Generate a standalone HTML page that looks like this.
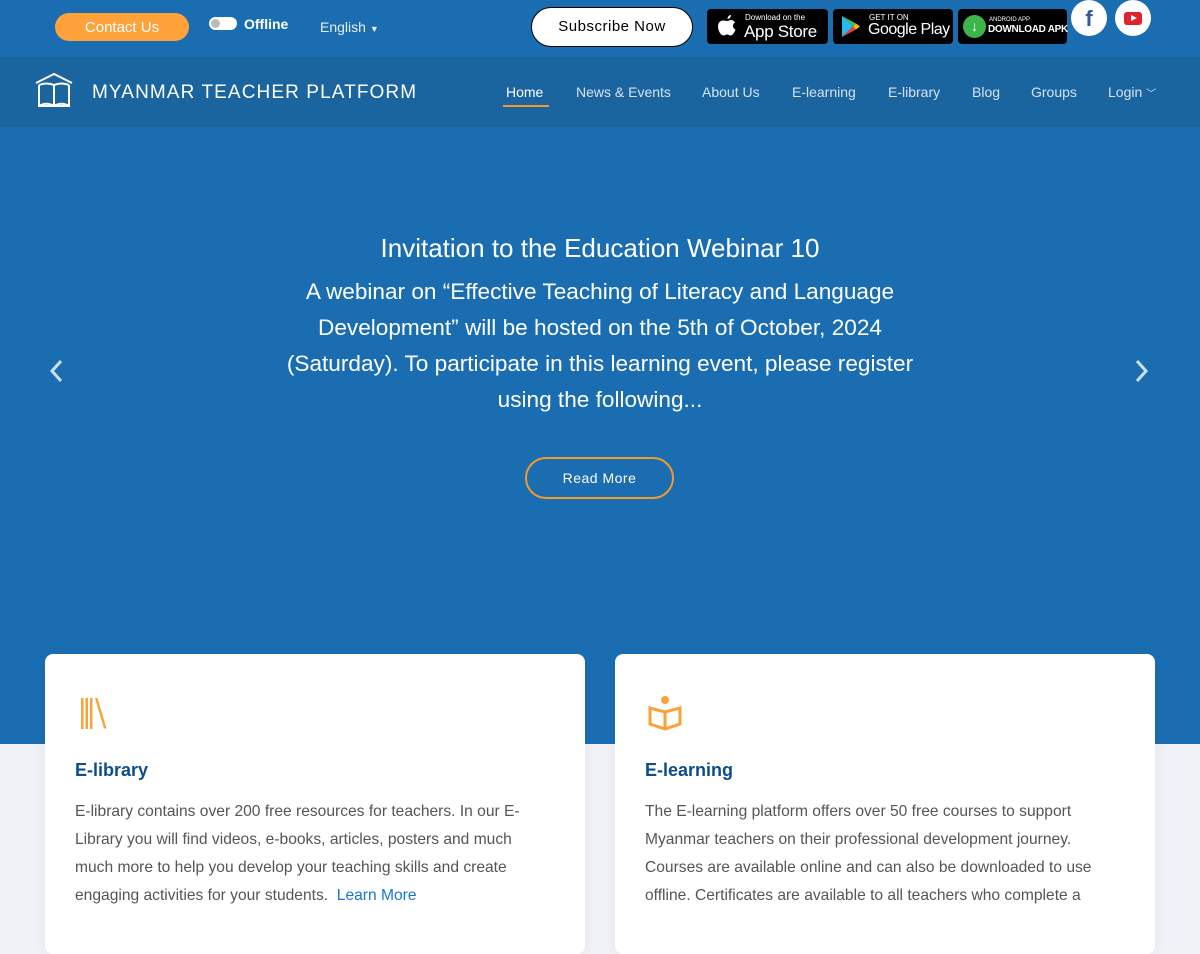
<!DOCTYPE html>
<html><head><meta charset="utf-8"><style>
*{box-sizing:border-box;margin:0;padding:0}
body{width:1200px;height:901px;overflow:hidden;font-family:"Liberation Sans",sans-serif;background:#f0f2f7;position:relative}
.top{position:absolute;left:0;top:0;width:1200px;height:57px;background:#1b6db2}
.nav{position:absolute;left:0;top:57px;width:1200px;height:70px;background:#1a64a0}
.hero{position:absolute;left:0;top:127px;width:1200px;height:617px;background:#1b6db2}
.abs{position:absolute;white-space:nowrap}
.contact{left:55px;top:13px;width:134px;height:28px;border-radius:14px;background:#ffa23a;color:#fff;font-size:15px;text-align:center;line-height:29px}
.tog{left:209px;top:17px;width:28px;height:13px;border-radius:7px;background:#fff}
.tog:after{content:"";position:absolute;left:2px;top:2px;width:9px;height:9px;border-radius:50%;background:#bbb}
.w{color:#fff}
.sub{left:531px;top:7px;width:162px;height:40px;border:1px solid #000;border-radius:20px;background:#fff;font-size:15px;text-align:center;line-height:38px;letter-spacing:.5px}
.badge{top:9px;height:35px;background:#000;border-radius:4px;color:#fff}
.circ{top:0;width:36px;height:36px;border-radius:50%;background:#fff}
.nl{top:84px;font-size:14px;color:#d6e3f0}
.card{top:654px;width:540px;height:300px;background:#fff;border-radius:8px;box-shadow:0 2px 12px rgba(0,0,0,.06)}
.card h3{position:absolute;left:30px;top:106px;font-size:18px;color:#0d4d8a}
.card p{position:absolute;left:30px;top:144px;white-space:nowrap;font-size:15.6px;line-height:28px;color:#555}
</style></head><body>
<div class="top"></div><div class="nav"></div><div class="hero"></div>
<div class="abs contact">Contact Us</div>
<div class="abs tog"></div>
<div class="abs w" style="left:244px;top:16px;font-size:14px;font-weight:bold">Offline</div>
<div class="abs w" style="left:320px;top:19px;font-size:14px;color:#e6eef7">English <span style="font-size:9px">▼</span></div>
<div class="abs sub">Subscribe Now</div>
<div class="abs badge" style="left:707px;width:121px">
 <svg class="abs" style="left:10px;top:6px" width="20" height="24" viewBox="0 0 20 24"><path d="M14 0c0 2-1.5 4-3.5 4 0-2 1.5-4 3.5-4zM10 6c1.5 0 2.5-1 4-1 2 0 3.5 1.5 4 2.5-3 1.5-2.5 6 .5 7-1 3-3 6-5 6-1.5 0-2-1-3.5-1s-2 1-3.5 1C4 20.5 1 16 1 11.5 1 7.5 3.5 5.5 6 5.5c1.5 0 2.5 .5 4 .5z" fill="#fff"/></svg>
 <div class="abs" style="left:38px;top:4px;font-size:8px">Download on the</div>
 <div class="abs" style="left:37px;top:13px;font-size:17px;letter-spacing:-.3px">App Store</div></div>
<div class="abs badge" style="left:833px;width:120px">
 <svg class="abs" style="left:8px;top:6px" width="20" height="23" viewBox="0 0 20 23"><path d="M1 1l11 10.5L1 22z" fill="#2bb8f0"/><path d="M1 1l14 7.5-3 3z" fill="#34c26a"/><path d="M1 22l14-7.5-3-3z" fill="#ea4335"/><path d="M15 8.5l4 3-4 3-3-3z" fill="#fbbc04"/></svg>
 <div class="abs" style="left:36px;top:4px;font-size:8px">GET IT ON</div>
 <div class="abs" style="left:35px;top:12px;font-size:16px;letter-spacing:-.5px">Google Play</div></div>
<div class="abs badge" style="left:958px;width:109px">
 <div class="abs" style="left:5px;top:6px;width:23px;height:23px;border-radius:50%;background:#3cb54a;color:#fff;font-size:14px;text-align:center;line-height:23px;font-weight:bold">↓</div>
 <div class="abs" style="left:31px;top:8px;font-size:6px">ANDROID APP</div>
 <div class="abs" style="left:30px;top:15px;font-size:10px;font-weight:bold;letter-spacing:-.3px">DOWNLOAD APK</div></div>
<div class="abs circ" style="left:1071px;color:#3b5998;font-weight:bold;font-size:22px;text-align:center;line-height:38px">f</div>
<div class="abs circ" style="left:1115px"><div class="abs" style="left:9px;top:12px;width:18px;height:13px;border-radius:3px;background:#e0232a"></div><div class="abs" style="left:16px;top:15px;border-left:6px solid #fff;border-top:3.5px solid transparent;border-bottom:3.5px solid transparent"></div></div>
<svg class="abs" style="left:34px;top:71px" width="40" height="38" viewBox="0 0 40 38" fill="none" stroke="#fff" stroke-width="2"><path d="M2 12L20 3l18 9"/><path d="M5 14v21h30V14M5 35c5-3 10-3 15 0 5-3 10-3 15 0M20 14v21M5 14c5-2 10-2 15 0 5-2 10-2 15 0"/></svg>
<div class="abs w" style="left:92px;top:82px;font-size:19px;letter-spacing:1.1px">MYANMAR TEACHER PLATFORM</div>
<div class="abs nl" style="left:506px;color:#fff">Home</div>
<div class="abs" style="left:503px;top:105px;width:46px;height:2px;background:#f39a2b"></div>
<div class="abs nl" style="left:576px">News &amp; Events</div>
<div class="abs nl" style="left:702px">About Us</div>
<div class="abs nl" style="left:792px">E-learning</div>
<div class="abs nl" style="left:888px">E-library</div>
<div class="abs nl" style="left:972px">Blog</div>
<div class="abs nl" style="left:1031px">Groups</div>
<div class="abs nl" style="left:1108px">Login <span style="font-size:10px">﹀</span></div>
<div class="abs w" style="left:0;width:1200px;top:233px;text-align:center;font-size:26px">Invitation to the Education Webinar 10</div>
<div class="abs w" style="left:0;width:1200px;top:274px;text-align:center;font-size:22.6px;line-height:36px">A webinar on “Effective Teaching of Literacy and Language<br>Development” will be hosted on the 5th of October, 2024<br>(Saturday). To participate in this learning event, please register<br>using the following...</div>
<div class="abs w" style="left:525px;top:457px;width:149px;height:42px;border:2px solid #f39a2b;border-radius:21px;text-align:center;line-height:38px;font-size:14px;letter-spacing:.5px">Read More</div>
<svg class="abs" style="left:48px;top:359px" width="16" height="24" viewBox="0 0 16 24"><path d="M13 2L4 12l9 10" stroke="#cfe0f0" stroke-width="3" fill="none"/></svg>
<svg class="abs" style="left:1134px;top:359px" width="16" height="24" viewBox="0 0 16 24"><path d="M3 2l9 10-9 10" stroke="#cfe0f0" stroke-width="3" fill="none"/></svg>
<div class="abs card" style="left:45px">
 <svg class="abs" style="left:35px;top:42px" width="32" height="34" viewBox="0 0 32 34" fill="#f9a23a"><rect x="1" y="2" width="2.5" height="31"/><rect x="5.5" y="2" width="2.5" height="31"/><rect x="10" y="2" width="2.5" height="31"/><path d="M15 2h2.5l9 30.5h-2.5z"/></svg>
 <h3>E-library</h3>
 <p>E-library contains over 200 free resources for teachers. In our E-<br>Library you will find videos, e-books, articles, posters and much<br>much more to help you develop your teaching skills and create<br>engaging activities for your students. &nbsp;<span style="color:#1a73d8">Learn More</span></p></div>
<div class="abs card" style="left:615px">
 <svg class="abs" style="left:32px;top:40px" width="38" height="40" viewBox="0 0 38 40"><circle cx="18" cy="6" r="4" fill="#f9a23a"/><path d="M3 14v16l15 5 15-5V14l-15 4zM18 18v17" stroke="#f9a23a" stroke-width="3" fill="none"/></svg>
 <h3>E-learning</h3>
 <p>The E-learning platform offers over 50 free courses to support<br>Myanmar teachers on their professional development journey.<br>Courses are available online and can also be downloaded to use<br>offline. Certificates are available to all teachers who complete a</p></div>
</body></html>
